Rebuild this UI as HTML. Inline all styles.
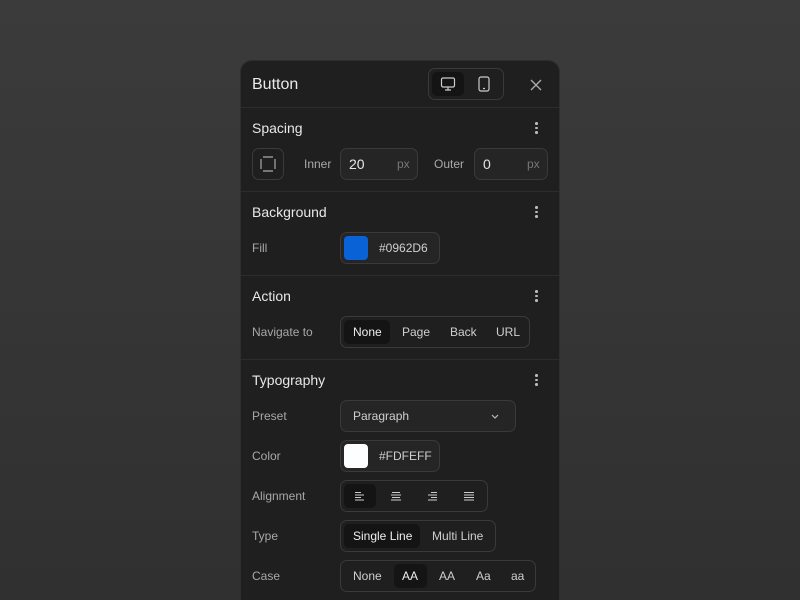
<!DOCTYPE html>
<html style="width:800px;height:600px;overflow:hidden"><head><style>
*{box-sizing:border-box;margin:0;padding:0}
body{width:800px;height:600px;overflow:hidden;background:linear-gradient(#3b3b3b,#303030);font-family:"Liberation Sans",sans-serif;position:relative;color:#e6e6e6}
.p{position:absolute;left:240px;top:60px;width:320px;height:560px;background:#1f1f1f;border:1px solid #2e2e2e;border-radius:12px;overflow:hidden}
.a{position:absolute}
.t{font-size:14px;color:#e8e8e8}
.l{font-size:12px;color:#a8a8a8}
.hr{position:absolute;left:0;right:0;height:1px;background:#2d2d2d}
.box{position:absolute;border:1px solid #3a3a3a;border-radius:7px;background:#252525}
.seg{position:absolute;top:3px;bottom:3px;background:#141414;border-radius:5px}
.s{font-size:12px;color:#cfcfcf;position:absolute}
.dots{position:absolute;left:294px;width:3px}
.dots i{display:block;width:2.5px;height:2.5px;border-radius:50%;background:#bbb;margin-bottom:2px}
</style></head><body>
<div class="p">
<div class="a" style="left:11px;top:15px;font-size:16px;color:#eaeaea">Button</div>
<div class="box" style="left:187px;top:7px;width:76px;height:32px;background:#1f1f1f">
 <div class="seg" style="left:3px;width:32px"></div>
 <svg class="a" style="left:11px;top:7px" width="16" height="16" viewBox="0 0 16 16" fill="none" stroke="#ccc" stroke-width="1.2"><rect x="1.5" y="2" width="13" height="9" rx="1.5"/><path d="M8 11v3M5 14h6"/></svg>
 <svg class="a" style="left:48px;top:7px" width="14" height="16" viewBox="0 0 14 16" fill="none" stroke="#ccc" stroke-width="1.2"><rect x="2" y="1" width="10" height="14" rx="2"/><path d="M6 12.5h2"/></svg>
</div>
<svg class="a" style="left:288px;top:17px" width="14" height="14" viewBox="0 0 14 14" stroke="#aaa" stroke-width="1.4"><path d="M2 2l10 10M12 2L2 12"/></svg>
<div class="hr" style="top:46px"></div>

<div class="a t" style="left:11px;top:59px">Spacing</div>
<div class="dots" style="top:61px"><i></i><i></i><i></i></div>
<div class="box" style="left:11px;top:87px;width:32px;height:32px;background:#1f1f1f"></div>
<svg class="a" style="left:19px;top:95px" width="16" height="16" viewBox="0 0 16 16" fill="none" stroke="#aaa" stroke-width="1.2"><path d="M1 3v10M15 3v10M3 1h10M3 15h10"/></svg>
<div class="a l" style="left:63px;top:96px">Inner</div>
<div class="box" style="left:99px;top:87px;width:78px;height:32px"><span class="a" style="left:8px;top:7px;font-size:14px">20</span><span class="a l" style="left:56px;top:8px;color:#777">px</span></div>
<div class="a l" style="left:193px;top:96px">Outer</div>
<div class="box" style="left:233px;top:87px;width:74px;height:32px"><span class="a" style="left:8px;top:7px;font-size:14px">0</span><span class="a l" style="left:52px;top:8px;color:#777">px</span></div>
<div class="hr" style="top:130px"></div>

<div class="a t" style="left:11px;top:143px">Background</div>
<div class="dots" style="top:145px"><i></i><i></i><i></i></div>
<div class="a l" style="left:11px;top:180px">Fill</div>
<div class="box" style="left:99px;top:171px;width:100px;height:32px"><div class="a" style="left:3px;top:3px;width:24px;height:24px;border-radius:4px;background:#0962D6"></div><span class="s" style="left:38px;top:8px">#0962D6</span></div>
<div class="hr" style="top:214px"></div>

<div class="a t" style="left:11px;top:227px">Action</div>
<div class="dots" style="top:229px"><i></i><i></i><i></i></div>
<div class="a l" style="left:11px;top:264px">Navigate to</div>
<div class="box" style="left:99px;top:255px;width:190px;height:32px;background:#1f1f1f"><div class="seg" style="left:3px;width:46px"></div>
<span class="s" style="left:12px;top:8px;color:#eee">None</span><span class="s" style="left:61px;top:8px">Page</span><span class="s" style="left:109px;top:8px">Back</span><span class="s" style="left:155px;top:8px">URL</span></div>
<div class="hr" style="top:298px"></div>

<div class="a t" style="left:11px;top:311px">Typography</div>
<div class="dots" style="top:313px"><i></i><i></i><i></i></div>
<div class="a l" style="left:11px;top:348px">Preset</div>
<div class="box" style="left:99px;top:339px;width:176px;height:32px"><span class="s" style="left:12px;top:8px">Paragraph</span>
<svg class="a" style="left:149px;top:12px" width="10" height="8" viewBox="0 0 10 8" fill="none" stroke="#bbb" stroke-width="1.2"><path d="M2 2l3 3 3-3"/></svg></div>
<div class="a l" style="left:11px;top:388px">Color</div>
<div class="box" style="left:99px;top:379px;width:100px;height:32px"><div class="a" style="left:3px;top:3px;width:24px;height:24px;border-radius:4px;background:#FDFEFF"></div><span class="s" style="left:38px;top:8px">#FDFEFF</span></div>
<div class="a l" style="left:11px;top:428px">Alignment</div>
<div class="box" style="left:99px;top:419px;width:148px;height:32px;background:#1f1f1f"><div class="seg" style="left:3px;width:32px"></div>
<svg class="a" style="left:13px;top:10px" width="120" height="10" viewBox="0 0 120 10" stroke="#ccc" stroke-width="1"><path d="M1 1.5h6M1 4h9M1 6.5h6M1 9h9"/><path d="M38 1.5h8M37 4h10M38 6.5h8M37 9h10"/><path d="M77 1.5h6M74 4h9M77 6.5h6M74 9h9"/><path d="M110 1.5h10M110 4h10M110 6.5h10M110 9h10"/></svg></div>
<div class="a l" style="left:11px;top:468px">Type</div>
<div class="box" style="left:99px;top:459px;width:156px;height:32px;background:#1f1f1f"><div class="seg" style="left:3px;width:76px"></div>
<span class="s" style="left:12px;top:8px;color:#eee">Single Line</span><span class="s" style="left:91px;top:8px">Multi Line</span></div>
<div class="a l" style="left:11px;top:508px">Case</div>
<div class="box" style="left:99px;top:499px;width:196px;height:32px;background:#1f1f1f"><div class="seg" style="left:53px;width:33px"></div>
<span class="s" style="left:12px;top:8px">None</span><span class="s" style="left:61px;top:8px;color:#eee">AA</span><span class="s" style="left:98px;top:8px">AA</span><span class="s" style="left:135px;top:8px">Aa</span><span class="s" style="left:170px;top:8px">aa</span></div>
</div>
</body></html>
